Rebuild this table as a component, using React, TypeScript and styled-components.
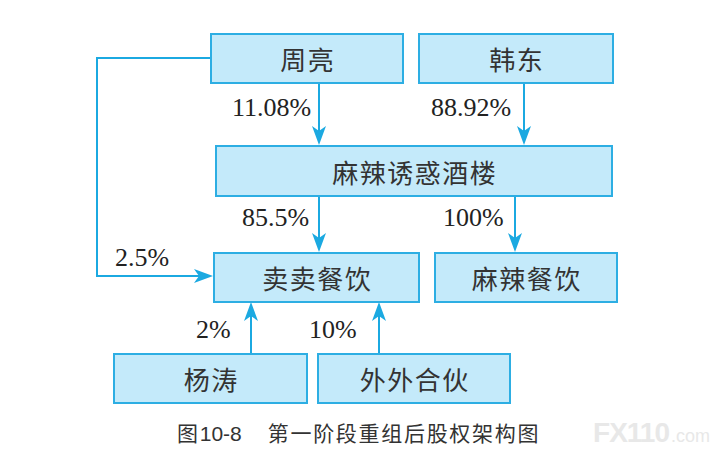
import React from 'react';
import styled, { createGlobalStyle } from 'styled-components';

const GlobalStyle = createGlobalStyle`
    html, body {
        margin: 0;
        padding: 0;
        background: #ffffff;
    }
`;

const Page = styled.div`
    position: relative;
    width: 723px;
    height: 460px;
    overflow: hidden;
    background: #ffffff;
    font-family: "Noto Sans CJK SC", "Noto Sans", sans-serif;
`;

const Canvas = styled.div`
    position: relative;
    width: 723px;
    height: 412px;
`;

const Wires = styled.svg`
    position: absolute;
    left: 0;
    top: 0;
`;

const Node = styled.div<{ $x: number; $y: number; $w: number; $h: number }>`
    position: absolute;
    left: ${p => p.$x}px;
    top: ${p => p.$y}px;
    width: ${p => p.$w}px;
    height: ${p => p.$h}px;
    box-sizing: border-box;
    border: 2px solid #2daee3;
    background: #c4eafa;
    display: flex;
    align-items: center;
    justify-content: center;
    color: #333333;
    font-size: 26px;
    letter-spacing: 1.5px;
    padding-left: 1.5px;
`;

const Share = styled.span<{ $x: number; $cy: number }>`
    position: absolute;
    left: ${p => p.$x}px;
    top: ${p => p.$cy - 13}px;
    font-family: "Liberation Serif", "DejaVu Serif", serif;
    font-size: 26px;
    line-height: 1;
    color: #222222;
    white-space: nowrap;
`;

const Caption = styled.div`
    padding-left: 177px;
    font-size: 21px;
    line-height: 40px;
    color: #333333;
    letter-spacing: 1.7px;
    white-space: nowrap;
`;

const FigNo = styled.span`
    font-family: "Liberation Sans", Arial, sans-serif;
    letter-spacing: 0;
    margin-right: 26px;
`;

const Watermark = styled.div`
    position: absolute;
    right: 13px;
    bottom: 11px;
    display: flex;
    align-items: baseline;
    color: #e8e8e8;
    font-family: "Liberation Sans", Arial, sans-serif;
    font-weight: bold;
    user-select: none;
`;

const MarkBig = styled.span`
    font-size: 28px;
    letter-spacing: -1px;
`;

const MarkSmall = styled.span`
    font-size: 18px;
    font-weight: normal;
    margin-left: 2px;
`;

const BLUE = '#1ba9e1';

type Dir = 'down' | 'up' | 'right';

const head = (x: number, y: number, dir: Dir) => {
    const L = 19;
    const W = 7;
    const N = 5;
    if (dir === 'down') {
        return `${x},${y} ${x - W},${y - L} ${x},${y - L + N} ${x + W},${y - L}`;
    }
    if (dir === 'up') {
        return `${x},${y} ${x - W},${y + L} ${x},${y + L - N} ${x + W},${y + L}`;
    }
    return `${x},${y} ${x - L},${y - W} ${x - L + N},${y} ${x - L},${y + W}`;
};

const arrows: { x1: number; y1: number; x2: number; y2: number; dir: Dir }[] = [
    { x1: 319, y1: 83, x2: 319, y2: 145, dir: 'down' },
    { x1: 524, y1: 84, x2: 524, y2: 145, dir: 'down' },
    { x1: 319, y1: 196, x2: 319, y2: 252, dir: 'down' },
    { x1: 515, y1: 196, x2: 515, y2: 252, dir: 'down' },
    { x1: 251, y1: 353, x2: 251, y2: 302, dir: 'up' },
    { x1: 379, y1: 353, x2: 379, y2: 302, dir: 'up' },
];

const nodes = [
    { label: '周亮', x: 210, y: 33, w: 194, h: 51 },
    { label: '韩东', x: 418, y: 33, w: 196, h: 51 },
    { label: '麻辣诱惑酒楼', x: 215, y: 145, w: 398, h: 52 },
    { label: '卖卖餐饮', x: 213, y: 252, w: 207, h: 51 },
    { label: '麻辣餐饮', x: 434, y: 252, w: 184, h: 51 },
    { label: '杨涛', x: 113, y: 353, w: 195, h: 51 },
    { label: '外外合伙', x: 317, y: 353, w: 194, h: 51 },
];

const shares = [
    { text: '11.08%', x: 232, cy: 108 },
    { text: '88.92%', x: 431, cy: 108 },
    { text: '85.5%', x: 242, cy: 218 },
    { text: '100%', x: 443, cy: 218 },
    { text: '2.5%', x: 115, cy: 258 },
    { text: '2%', x: 196, cy: 330 },
    { text: '10%', x: 309, cy: 330 },
];

const App: React.FC = () => {
    return (
        <Page>
            <GlobalStyle />
            <Canvas>
                <Wires width={723} height={412} viewBox="0 0 723 412">
                    <polyline
                        points="210,58 97,58 97,276 200,276"
                        fill="none"
                        stroke={BLUE}
                        strokeWidth={2}
                    />
                    <polygon points={head(213, 276, 'right')} fill={BLUE} />
                    {arrows.map((a, i) => (
                        <g key={i}>
                            <line
                                x1={a.x1}
                                y1={a.y1}
                                x2={a.x2}
                                y2={a.dir === 'down' ? a.y2 - 10 : a.y2 + 10}
                                stroke={BLUE}
                                strokeWidth={2}
                            />
                            <polygon points={head(a.x2, a.y2, a.dir)} fill={BLUE} />
                        </g>
                    ))}
                </Wires>
                {nodes.map(n => (
                    <Node key={n.label} $x={n.x} $y={n.y} $w={n.w} $h={n.h}>
                        {n.label}
                    </Node>
                ))}
                {shares.map(s => (
                    <Share key={s.text} $x={s.x} $cy={s.cy}>
                        {s.text}
                    </Share>
                ))}
            </Canvas>
            <Caption>
                图<FigNo>10-8</FigNo>第一阶段重组后股权架构图
            </Caption>
            <Watermark>
                <MarkBig>FX110</MarkBig>
                <MarkSmall>.com</MarkSmall>
            </Watermark>
        </Page>
    );
};

export default App;
